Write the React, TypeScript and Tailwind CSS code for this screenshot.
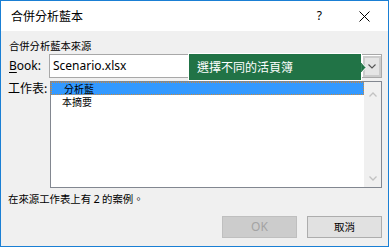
import React from "react";

const CJK = { fontFamily: '"Noto Sans CJK TC", "Noto Sans", sans-serif' };
const LAT = { fontFamily: '"Noto Sans", "Noto Sans CJK TC", sans-serif' };

export default function App() {
  return (
    <div className="w-[389px] h-[247px] border border-[#1a7fd4] bg-[#f0f0f0] flex flex-col relative overflow-hidden text-black">
      {/* Title bar */}
      <div className="h-[30px] bg-white flex items-center pl-[10px] shrink-0">
        <span className="block text-[12px] leading-[12px] flex-1" style={CJK}>合併分析藍本</span>
        <span className="block text-[12px] leading-[12px] mr-[37px]" style={LAT}>?</span>
        <svg width="11" height="11" viewBox="0 0 11 11" className="mr-[18px]">
          <path d="M0.5 0.5 L10.5 10.5 M10.5 0.5 L0.5 10.5" stroke="#000" strokeWidth="1" />
        </svg>
      </div>

      {/* Body */}
      <div className="flex flex-col pl-[7px] pr-[6px]">
        <div className="h-[12px] mt-[9px] mb-[1px] flex items-center pl-[1px]">
          <span className="block text-[10.3px] leading-[12px]" style={CJK}>合併分析藍本來源</span>
        </div>

        {/* Book row */}
        <div className="flex items-center h-[24px] mt-[1px]">
          <span className="block w-[41px] text-[12px] leading-[12px] pl-[1px]" style={LAT}>
            <span className="underline underline-offset-2">B</span>ook:
          </span>
          <div className="flex-1 h-[24px] border border-[#a8a8a8] bg-white flex items-center">
            <span className="block flex-1 pl-[3px] text-[12px] leading-[12px]" style={LAT}>Scenario.xlsx</span>
            <div className="w-[18px] h-[21px] border-2 border-[#cccccc] bg-[#e5e5e5] flex items-center justify-center">
              <svg width="8" height="5" viewBox="0 0 8 5">
                <path d="M0.5 0.5 L4 4 L7.5 0.5" stroke="#555" strokeWidth="1.1" fill="none" />
              </svg>
            </div>
          </div>
        </div>

        {/* Worksheet list row */}
        <div className="flex mt-[3px]">
          <span className="block w-[42px] text-[12px] leading-[12px] pt-[1px]" style={CJK}>工作表:</span>
          <div className="flex-1 h-[107px] border border-[#828790] bg-white flex">
            <div className="flex-1 flex flex-col">
              <div className="h-[13px] bg-[#3399ff] border border-dotted border-[#c88a40] flex items-center pl-[12px]">
                <span className="block text-[10px] leading-[11px]" style={CJK}>分析藍</span>
              </div>
              <div className="h-[13px] flex items-center pl-[11px]">
                <span className="block text-[10px] leading-[11px]" style={CJK}>本摘要</span>
              </div>
            </div>
            <div className="w-[17px] bg-[#f0f0f0] flex flex-col items-center justify-between pt-[10px] pb-[6px]">
              <svg width="8" height="5" viewBox="0 0 8 5">
                <path d="M0.5 4.5 L4 1 L7.5 4.5" stroke="#c2c2c2" strokeWidth="1.3" fill="none" />
              </svg>
              <svg width="8" height="5" viewBox="0 0 8 5">
                <path d="M0.5 0.5 L4 4 L7.5 0.5" stroke="#c2c2c2" strokeWidth="1.3" fill="none" />
              </svg>
            </div>
          </div>
        </div>

        {/* Status */}
        <div className="h-[12px] mt-[5px] flex items-center">
          <span className="block text-[10.4px] leading-[12px]" style={CJK}>
            在來源工作表上有 <span style={LAT} className="text-[11px]">2</span> 的案例。
          </span>
        </div>

        {/* Buttons */}
        <div className="flex justify-end gap-[10px] mt-[11px]">
          <div className="w-[75px] h-[22px] bg-[#cccccc] border border-[#bfbfbf] flex items-center justify-center">
            <span className="block text-[12px] leading-[12px] text-[#a3a3a3]" style={LAT}>OK</span>
          </div>
          <div className="w-[75px] h-[22px] bg-[#e1e1e1] border border-[#adadad] flex items-center justify-center">
            <span className="block text-[10.5px] leading-[12px]" style={CJK}>取消</span>
          </div>
        </div>
      </div>

      {/* Tooltip callout */}
      <div className="absolute left-[187px] top-[52px] w-[174px] h-[28px] bg-[#217346] border border-white flex items-center pl-[8px]">
        <span className="block text-[12px] leading-[12px] text-white" style={CJK}>選擇不同的活頁簿</span>
        <svg width="6" height="11" viewBox="0 0 6 11" className="absolute left-[172px] top-[8px]">
          <path d="M0 0 L5 5.5 L0 11 Z" fill="#217346" stroke="white" strokeWidth="1" />
          <path d="M0 1 L0 10" stroke="#217346" strokeWidth="1.5" />
        </svg>
      </div>
    </div>
  );
}
